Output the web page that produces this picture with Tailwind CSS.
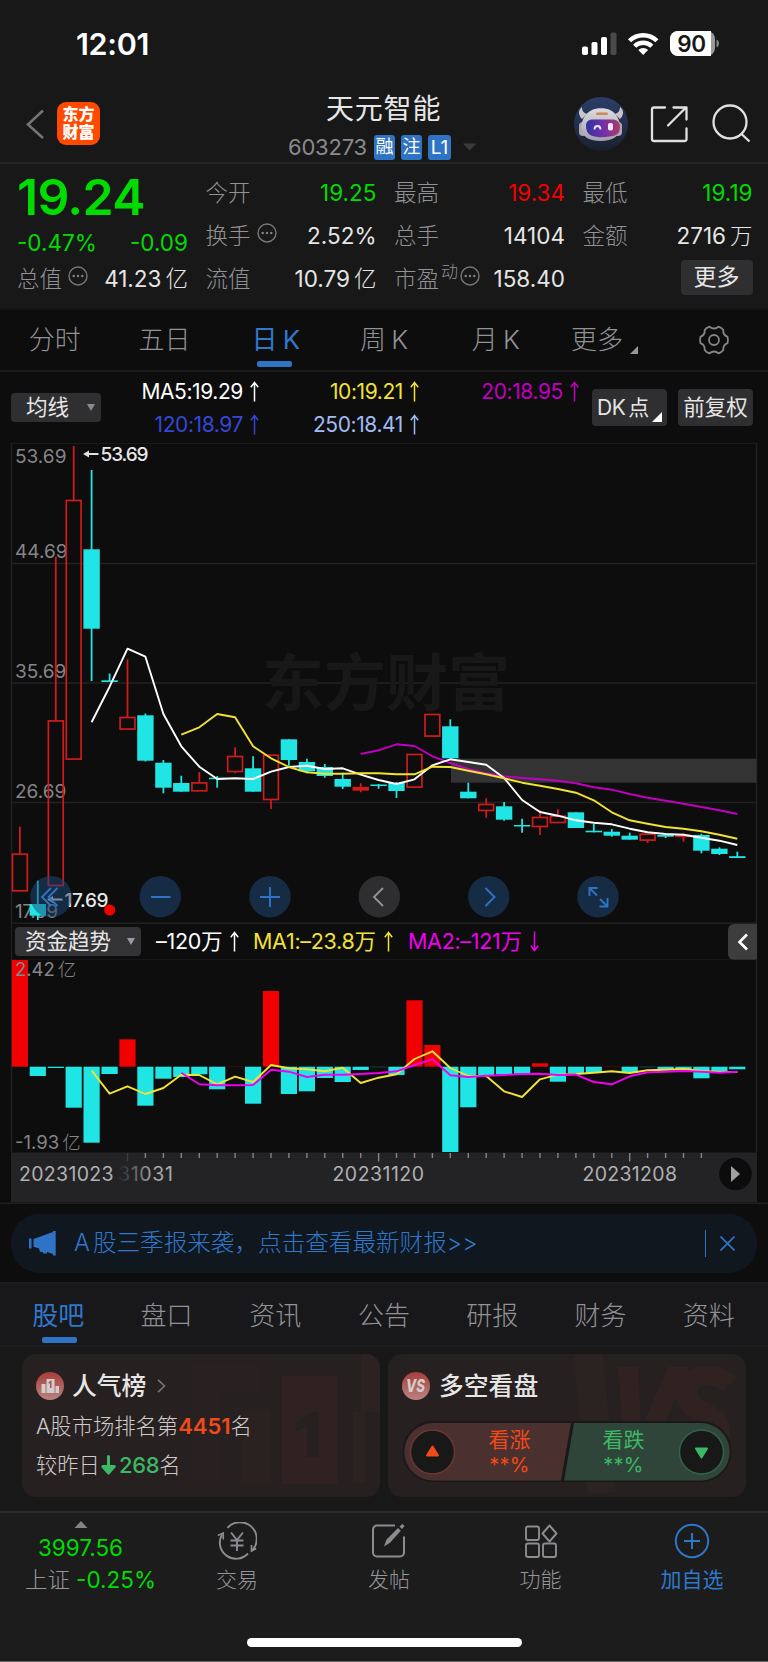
<!DOCTYPE html>
<html lang="zh-CN">
<head>
<meta charset="utf-8">
<title>天元智能 603273</title>
<script src="https://cdn.jsdelivr.net/npm/@tailwindcss/browser@4"></script>
</head>
<body class="bg-[#0d0d0d]">
<div class="w-[768px] h-[1662px] overflow-hidden flex flex-col bg-[#0d0d0d] text-[#e6e6e6] font-['Inter','Noto_Sans_CJK_SC',sans-serif] leading-none whitespace-nowrap">

  <!-- status bar -->
  <div class="h-[88px] shrink-0 bg-[#181818] flex justify-between items-center pl-[76px] pr-[49px]">
    <div class="text-[30.500px] font-semibold text-white tracking-[-0.300px]">12:01</div>
    <svg width="139" height="30" viewBox="580 29 139 30">
      <g fill="#fff"><rect x="582" y="46.500" width="6" height="8.500" rx="1.800"/><rect x="591.500" y="42" width="6" height="13" rx="1.800"/><rect x="601" y="37" width="6" height="18" rx="1.800"/></g>
      <rect x="610.500" y="32.500" width="6" height="22.500" rx="1.800" fill="#4a4a4a"/>
      <g fill="none" stroke="#fff" stroke-width="4.400"><path d="M629.500 40.800a19.500 19.500 0 0 1 27.400 0"/><path d="M634.600 46.300a12.200 12.200 0 0 1 17.200 0"/></g>
      <path d="M638.300 50a7 7 0 0 1 9.800 0l-4.900 5z" fill="#fff"/>
      <rect x="670" y="31" width="45" height="25" rx="8" fill="#9a9a9a"/>
      <path d="M678 31h33v25h-33a8 8 0 0 1-8-8v-9a8 8 0 0 1 8-8z" fill="#fff"/>
      <path d="M716.500 39.500q2.500 1 2.500 4t-2.500 4z" fill="#8a8a8a"/>
      <text x="691.500" y="51.500" text-anchor="middle" font-size="22.500" font-weight="600" fill="#181818" letter-spacing="-0.300">90</text>
    </svg>
  </div>

  <!-- title bar -->
  <div class="h-[76px] shrink-0 bg-[#181818] border-b-2 border-[#242424] flex items-start pl-[25px]">
    <svg class="mt-[21px]" width="22" height="30"><path d="M18 1.500L3 15.500l15 13.500" fill="none" stroke="#747474" stroke-width="2.600"/></svg>
    <div class="ml-[10px] mt-[14px] w-[43px] h-[43px] rounded-[9px] bg-[#ff4a00] text-white text-[16px] font-black leading-[18px] text-center pt-[3px]">东方<br>财富</div>
    <div class="ml-[188px] w-[190px] flex flex-col">
      <div class="mt-[6px] h-[30px] text-[28px] leading-[30px] pl-[38px] tracking-[0.800px]">天元智能</div>
      <div class="mt-[10px] h-[26px] flex items-center">
        <span class="text-[22px] w-[86px] text-[#8a8a8e] tracking-[-0.200px]">603273</span>
        <span class="w-[21px] h-[25px] rounded-[3px] bg-[#2f73c4] text-white text-[18px] leading-[24px] text-center">融</span>
        <span class="ml-[6px] w-[21px] h-[25px] rounded-[3px] bg-[#2f73c4] text-white text-[18px] leading-[24px] text-center">注</span>
        <span class="ml-[6px] w-[23px] h-[25px] rounded-[3px] bg-[#2f73c4] text-white text-[19px] leading-[25px] text-center">L1</span>
        <svg class="ml-[12px] shrink-0" width="14" height="8"><path d="M0 .5h13.500L6.700 7.500z" fill="#3b3b3b"/></svg>
      </div>
    </div>
    <svg class="ml-auto" width="196" height="70" viewBox="572 88 196 70">
      <defs>
        <linearGradient id="halo" x1="0" x2="0" y1="0" y2="1"><stop offset="0" stop-color="#2b3d68"/><stop offset=".6" stop-color="#222d4a"/><stop offset="1" stop-color="#1a1f2b"/></linearGradient>
        <linearGradient id="visor" x1="0" x2="1"><stop offset="0" stop-color="#3032a0"/><stop offset=".5" stop-color="#7030a8"/><stop offset="1" stop-color="#b03a68"/></linearGradient>
        <linearGradient id="shell" x1="0" x2="0" y1="0" y2="1"><stop offset="0" stop-color="#dddcdf"/><stop offset="1" stop-color="#a3a0ac"/></linearGradient>
      </defs>
      <circle cx="601" cy="124" r="27" fill="url(#halo)"/>
      <path d="M582 107c-4 3-4 8 0 12l5-5c-3-1-5-3-5-7zM620 107c4 3 4 8 0 12l-5-5c3-1 5-3 5-7z" fill="#c8c6cc"/>
      <rect x="579" y="122" width="8" height="14" rx="4" fill="#a9a8b5"/><rect x="614" y="122" width="8" height="14" rx="4" fill="#a9a8b5"/>
      <path d="M592 110c4-2.500 14-2.500 18 0 6 3 10 9 10 17 0 9-7 14-19.500 14S581.500 136 581.500 127c0-8 4.500-14 10.500-17z" fill="url(#shell)"/>
      <path d="M586 126c0-4 2-6.500 7-6.500h19c5 0 8 2.500 8 7.500 0 6-3 8.500-10 9.500-15 2-24 0-24-10.500z" fill="url(#visor)"/>
      <path d="M594.500 129.500q0-3.500 3-3.500t3 3.500" fill="none" stroke="#e4e6ff" stroke-width="1.800"/><rect x="608" y="123" width="5" height="7.500" rx="1.800" fill="#f0e4ff"/>
      <rect x="596" y="112.500" width="12" height="2.500" rx="1.200" fill="#c98a5c"/>
      <g fill="none" stroke="#e0e0e0" stroke-width="2.300" stroke-linecap="round" stroke-linejoin="round"><path d="M665 107.500h-11a2 2 0 0 0-2 2v29.500a2 2 0 0 0 2 2h30.500a2 2 0 0 0 2-2v-10.500M668 125.500L686 107.500M673.500 107.500h13v12"/></g>
      <g fill="none" stroke="#e0e0e0" stroke-width="2.300"><circle cx="730" cy="122" r="16.500"/><path d="M741 133.500L749.500 141.500"/></g>
    </svg>
  </div>

  <!-- quote summary -->
  <div class="h-[146px] shrink-0 bg-[#181818] border-b-2 border-[#141414] grid grid-cols-[171px_171px_171px_170px] grid-rows-[43px_43px_43px] gap-x-[17.500px] content-start pt-[8px] pl-[17px] text-[22.500px]">
    <div class="row-span-2 flex flex-col text-[#00dc00]">
      <div class="text-[50px] font-semibold tracking-[-0.700px] h-[50px] leading-[50px]">19.24</div>
      <div class="flex justify-between mt-[10px] text-[22.500px]"><span>-0.47%</span><span>-0.09</span></div>
    </div>
    <div class="flex justify-between items-center"><span class="text-[#929296] font-light">今开</span><span class="text-[#00dc00]">19.25</span></div>
    <div class="flex justify-between items-center"><span class="text-[#929296] font-light">最高</span><span class="text-[#f40000]">19.34</span></div>
    <div class="flex justify-between items-center"><span class="text-[#929296] font-light">最低</span><span class="text-[#00dc00]">19.19</span></div>
    <div class="flex justify-between items-center"><span class="flex items-center gap-[6px] text-[#929296] font-light">换手<svg class="mb-[8px]" width="20" height="20"><circle cx="10" cy="10" r="9" fill="none" stroke="#77777a" stroke-width="1.400"/><g fill="#858589"><circle cx="5.700" cy="10" r="1.200"/><circle cx="10" cy="10" r="1.200"/><circle cx="14.300" cy="10" r="1.200"/></g></svg></span><span>2.52%</span></div>
    <div class="flex justify-between items-center"><span class="text-[#929296] font-light">总手</span><span>14104</span></div>
    <div class="flex justify-between items-center"><span class="text-[#929296] font-light">金额</span><span class="flex items-center gap-[4px]">2716<span class="font-light">万</span></span></div>
    <div class="flex justify-between items-center"><span class="flex items-center gap-[6px] text-[#929296] font-light">总值<svg class="mb-[8px]" width="20" height="20"><circle cx="10" cy="10" r="9" fill="none" stroke="#77777a" stroke-width="1.400"/><g fill="#858589"><circle cx="5.700" cy="10" r="1.200"/><circle cx="10" cy="10" r="1.200"/><circle cx="14.300" cy="10" r="1.200"/></g></svg></span><span class="flex items-center gap-[4px]">41.23<span class="font-light">亿</span></span></div>
    <div class="flex justify-between items-center"><span class="text-[#929296] font-light">流值</span><span class="flex items-center gap-[4px]">10.79<span class="font-light">亿</span></span></div>
    <div class="flex justify-between items-center"><span class="flex items-center text-[#929296] font-light">市盈<span class="text-[17px] mb-[14px] ml-[2px]">动</span><svg class="mb-[8px] ml-[2px]" width="20" height="20"><circle cx="10" cy="10" r="9" fill="none" stroke="#77777a" stroke-width="1.400"/><g fill="#858589"><circle cx="5.700" cy="10" r="1.200"/><circle cx="10" cy="10" r="1.200"/><circle cx="14.300" cy="10" r="1.200"/></g></svg></span><span>158.40</span></div>
    <div class="flex justify-end items-center"><span class="w-[72px] h-[35px] mb-[4px] rounded-[4px] bg-[#2f2f31] text-center text-[23px] leading-[34px]">更多</span></div>
  </div>

  <!-- period tabs -->
  <div class="h-[62px] shrink-0 border-b-2 border-[#1b1b1b] grid grid-cols-7 text-[26px] font-light text-[#929296] text-center [word-spacing:-2px]">
    <div class="pt-[17px]">分时</div>
    <div class="pt-[17px]">五日</div>
    <div class="pt-[17px] flex flex-col items-center text-[#2f78cc]"><span class="font-normal pl-[3px]">日 K</span><span class="mt-[8px] w-[35px] h-[6px] rounded-[2px] bg-[#2f73c4]"></span></div>
    <div class="pt-[17px]">周 K</div>
    <div class="pt-[17px] pl-[4px]">月 K</div>
    <div class="pt-[17px] pl-[2px] flex justify-center gap-[7px]"><span>更多</span><svg class="mt-[19px]" width="8" height="8"><path d="M8 0v8H0z" fill="#98989b"/></svg></div>
    <div class="pt-[14px] pl-[1px] flex justify-center"><svg width="32" height="32" viewBox="-16 -16 32 32"><g fill="none" stroke="#858589" stroke-width="1.800" stroke-linejoin="round"><path d="M-4.500-13.300Q0-9.800 4.500-13.300Q7.700-12.300 9.300-10Q8.800-5.200 13.500-3.200Q14.400 0 13.500 3.200Q8.800 5.200 9.300 10Q7.700 12.300 4.500 13.300Q0 9.800-4.500 13.300Q-7.700 12.300-9.300 10Q-8.800 5.200-13.500 3.200Q-14.400 0-13.500-3.200Q-8.800-5.200-9.300-10Q-7.700-12.300-4.500-13.300z"/><circle r="5"/></g></svg></div>
  </div>

  <!-- moving averages -->
  <div class="h-[71px] shrink-0 flex items-center pl-[11px] text-[21px]">
    <div class="w-[90px] h-[29px] rounded-[4px] bg-[#2f2f31] flex items-center justify-between pl-[15px] pr-[6px] text-[21.500px]">均线<svg width="8" height="7"><path d="M0 0h8L4 7z" fill="#8a8a8e"/></svg></div>
    <div class="w-[479px] grid grid-cols-[158px_160px_160px] grid-rows-[33px_33px] tracking-[-0.400px]">
      <div class="flex items-center justify-end gap-[7px] text-white">MA5:19.29<svg width="9" height="21"><path d="M4.500 20.500V2M.8 6.200L4.500 1.500l3.700 4.700" fill="none" stroke="currentColor" stroke-width="1.500"/></svg></div>
      <div class="flex items-center justify-end gap-[7px] text-[#f2e233]">10:19.21<svg width="9" height="21"><path d="M4.500 20.500V2M.8 6.200L4.500 1.500l3.700 4.700" fill="none" stroke="currentColor" stroke-width="1.500"/></svg></div>
      <div class="flex items-center justify-end gap-[7px] text-[#c000c0]">20:18.95<svg width="9" height="21"><path d="M4.500 20.500V2M.8 6.200L4.500 1.500l3.700 4.700" fill="none" stroke="currentColor" stroke-width="1.500"/></svg></div>
      <div class="flex items-center justify-end gap-[7px] text-[#3546d6]">120:18.97<svg width="9" height="21"><path d="M4.500 20.500V2M.8 6.200L4.500 1.500l3.700 4.700" fill="none" stroke="currentColor" stroke-width="1.500"/></svg></div>
      <div class="flex items-center justify-end gap-[7px] text-[#a0bbf4]">250:18.41<svg width="9" height="21"><path d="M4.500 20.500V2M.8 6.200L4.500 1.500l3.700 4.700" fill="none" stroke="currentColor" stroke-width="1.500"/></svg></div>
    </div>
    <div class="ml-[12px] w-[75px] h-[37px] rounded-[4px] bg-[#2f2f31] flex items-center relative pl-[5px] gap-[3px] text-[21px]"><span class="tracking-[-0.500px]">DK</span><span>点</span><svg class="absolute right-[5px] bottom-[4px]" width="10" height="10"><path d="M10 0v10H0z" fill="#fff"/></svg></div>
    <div class="ml-[11px] w-[75px] h-[37px] rounded-[4px] bg-[#2f2f31] flex items-center justify-center text-[21.500px]">前复权</div>
  </div>

  <!-- candlestick chart -->
  <svg class="shrink-0" id="candles" width="768" height="481" viewBox="0 443 768 481"></svg>

  <!-- capital flow indicator header -->
  <div class="h-[35px] shrink-0 mx-[11px] border-x border-[#222] flex items-center pl-[3px] text-[21.500px]">
    <div class="w-[126px] h-[29px] rounded-[4px] bg-[#333335] flex items-center justify-between pl-[10px] pr-[6px] text-[21.500px]">资金趋势<svg width="8" height="7"><path d="M0 0h8L4 7z" fill="#9a9aa0"/></svg></div>
    <div class="ml-[15px] w-[97px] flex items-center gap-[8px] text-white tracking-[-0.300px]">–120万<svg width="9" height="21"><path d="M4.500 20.500V2M.8 6.200L4.500 1.500l3.700 4.700" fill="none" stroke="currentColor" stroke-width="1.500"/></svg></div>
    <div class="w-[155px] flex items-center gap-[8px] text-[#f2e233] tracking-[-0.300px]">MA1:–23.8万<svg width="9" height="21"><path d="M4.500 20.500V2M.8 6.200L4.500 1.500l3.700 4.700" fill="none" stroke="currentColor" stroke-width="1.500"/></svg></div>
    <div class="flex items-center gap-[8px] text-[#f000f0] tracking-[-0.300px]">MA2:–121万<svg width="9" height="21"><path d="M4.500 .5V19M.8 14.800l3.700 4.700 3.700-4.700" fill="none" stroke="currentColor" stroke-width="1.500"/></svg></div>
    <div class="ml-auto -mr-px w-[29px] h-[36px] rounded-l-[6px] bg-[#3d3d3e] flex items-center justify-center"><svg width="12" height="18"><path d="M10 1.500L2.500 9l7.500 7.500" fill="none" stroke="#fff" stroke-width="2.600"/></svg></div>
  </div>

  <!-- capital flow chart -->
  <svg class="shrink-0" id="flow" width="768" height="245" viewBox="0 959 768 245"></svg>

  <!-- notice -->
  <div class="h-[80px] shrink-0 pt-[9.500px] px-[11px] border-b-2 border-[#1d1d1f]">
    <div class="h-[59px] rounded-[28px] bg-[#10171f] flex items-center pl-[18px] pr-[22px] text-[#2f78cc]">
      <svg width="27" height="25"><path d="M0 7.500h2.500v10H0zM4.500 8L24 1V0h2.700v24.500H24V23l-6-2v1.500h-4V21h-3l-1-3.500-5.500-1.800z" fill="#2f73c4"/></svg>
      <span class="ml-[18px] text-[23.600px] font-light">A<span class="ml-[3px]">股三季报来袭，点击查看最新财报&gt;&gt;</span></span>
      <span class="ml-auto w-[1.500px] h-[27px] bg-[#2f73c4]"></span>
      <svg class="ml-[14px]" width="15" height="15"><path d="M.5 .5l14 14M14.500 .5l-14 14" stroke="#2f73c4" stroke-width="1.700"/></svg>
    </div>
  </div>

  <!-- content tabs -->
  <div class="h-[63px] shrink-0 bg-[#18181a] border-b-2 border-[#1d1d1d] px-[5px] grid grid-cols-7 text-[26px] font-light text-[#929296] text-center">
    <div class="pt-[17px] flex flex-col items-center text-[#2f78cc]"><span class="font-normal leading-[30px] -ml-[2px]">股吧</span><span class="mt-[6px] w-[35px] h-[6px] rounded-[2px] bg-[#2f73c4]"></span></div>
    <div class="pt-[17px] leading-[30px] -ml-[2px]">盘口</div><div class="pt-[17px] leading-[30px] -ml-[1px]">资讯</div><div class="pt-[17px] leading-[30px]">公告</div><div class="pt-[17px] leading-[30px]">研报</div><div class="pt-[17px] leading-[30px]">财务</div><div class="pt-[17px] leading-[30px]">资料</div>
  </div>

  <!-- cards -->
  <div class="h-[166px] shrink-0 bg-[#181818] border-b-2 border-[#2b2b2b] pt-[7px] pl-[22px] flex gap-[8px]">
    <div class="w-[358px] h-[143px] rounded-[14px] bg-[#272020] relative overflow-hidden">
      <svg class="absolute inset-0" width="358" height="143"><path d="M171 10h67v27h-40v89h-27z" fill="#292121"/><path d="M220 57h28v72h-28z" fill="#2c2121"/><path d="M260 22h55v108h-55z" fill="#302222"/><path d="M339 0h19v58h-15v70h-12V58h8z" fill="#2c2222"/><path d="M274 68l17-10h6v45h-12V72l-11 5z" fill="#272020"/></svg>
      <div class="relative pl-[14px] pt-[18px] flex items-center">
        <svg width="28" height="28"><defs><linearGradient id="rose" x1="0" x2="0" y1="0" y2="1"><stop offset="0" stop-color="#a83e3a"/><stop offset="1" stop-color="#b98380"/></linearGradient></defs><circle cx="14" cy="14" r="14" fill="url(#rose)"/><path d="M5.500 12h4v9h-4zM10.500 7h8v14h-8zM19.500 14h3.500v7h-3.500z" fill="#d2cccc"/><path d="M12.800 11l2-1.300v6.300" stroke="#a65652" stroke-width="1.500" fill="none"/></svg>
        <span class="ml-[8px] text-[24.800px] font-medium">人气榜</span>
        <svg class="ml-[11px]" width="9" height="14"><path d="M1 .8l6.500 6.200L1 13.200" fill="none" stroke="#77777a" stroke-width="1.600"/></svg>
      </div>
      <div class="relative pl-[14px] mt-[15px] h-[22px] leading-[22px] text-[21.300px] text-[#cfcbcb] font-light">A股市场排名第<span class="text-[#f04a18] font-semibold text-[22px]">4451</span>名</div>
      <div class="relative pl-[14px] mt-[17px] h-[22px] leading-[22px] text-[21.300px] text-[#cfcbcb] font-light flex items-center">较昨日<svg class="mx-px" width="15" height="20"><path d="M7.500 1.500v15M1.800 11.500l5.700 6.500 5.700-6.500z" stroke="#3cb866" stroke-width="3" stroke-linecap="round" stroke-linejoin="round" fill="#3cb866"/></svg><span class="text-[#3cb866] font-medium text-[22px] tracking-[-0.300px] ml-[2px]">268</span>名</div>
    </div>
    <div class="w-[358px] h-[143px] rounded-[14px] bg-[#272020] relative overflow-hidden">
      <svg class="absolute inset-0" width="358" height="143"><path d="M185 0h30l13 138-28 3z" fill="#2b2222"/><path d="M230 13h20l3 62 27-62h21l-42 98h-22zM349 24l-14 13c-10-8-26-7-26 2 0 10 33 12 33 37 0 22-24 34-60 25l4-16c20 5 34 3 34-7 0-11-32-12-32-37 0-30 38-38 61-17z" fill="#312222"/></svg>
      <div class="relative pl-[14px] pt-[18px] flex items-center">
        <svg width="28" height="28"><circle cx="14" cy="14" r="14" fill="url(#rose)"/><text x="13.500" y="20" text-anchor="middle" font-size="17" font-weight="800" font-style="italic" fill="#d4cccc" textLength="19" lengthAdjust="spacingAndGlyphs">VS</text></svg>
        <span class="ml-[9px] text-[24.800px] font-medium">多空看盘</span>
      </div>
      <div class="absolute left-[14px] top-[66px] w-[332px] h-[64px]">
        <svg class="absolute inset-0" width="332" height="64" viewBox="402 1420 332 64">
          <rect x="402.500" y="1421" width="329" height="61" rx="30.500" fill="#1a1818"/>
          <path d="M433 1423h138l-10 57.500H433a28.700 28.700 0 0 1 0-57.500z" fill="#4a302e"/>
          <path d="M574 1423H701a28.700 28.700 0 0 1 0 57.500H564z" fill="#2f4539"/>
          <circle cx="432.500" cy="1452" r="22" fill="#181818" stroke="#6b3733" stroke-width="1.500"/>
          <circle cx="701.500" cy="1452" r="22" fill="#181818" stroke="#30644a" stroke-width="1.500"/>
          <path d="M432.500 1446.500l5.500 9h-11z" fill="#f04a18" stroke="#f04a18" stroke-width="2" stroke-linejoin="round"/>
          <path d="M701.500 1457.500l5.500-9h-11z" fill="#3cb866" stroke="#3cb866" stroke-width="2" stroke-linejoin="round"/>
        </svg>
        <div class="relative flex justify-between pl-[64px] pr-[67px] pt-[9px] text-center">
          <div class="w-[87px] flex flex-col text-[#f04a18]"><span class="h-[24px] leading-[22px] text-[21px]">看涨</span><span class="h-[24px] leading-[24px] text-[20px] tracking-[0.300px]">**%</span></div>
          <div class="w-[87px] flex flex-col text-[#3cb866]"><span class="h-[24px] leading-[22px] text-[21px]">看跌</span><span class="h-[24px] leading-[24px] text-[20px] tracking-[0.300px]">**%</span></div>
        </div>
      </div>
    </div>
  </div>

  <!-- bottom navigation -->
  <div class="h-[149px] shrink-0 bg-[#1c1c1c] border-b border-[#666] flex flex-col">
    <div class="h-[125px] flex text-[21px] text-[#96969a] font-light">
      <div class="w-[161px] flex flex-col items-center pt-[8px]">
        <svg width="14" height="7"><path d="M7 0l6.500 7H.5z" fill="#858589"/></svg>
        <span class="mt-[9px] text-[22.500px] font-normal text-[#00dc00]">3997.56</span>
        <span class="mt-[9px] ml-[20px] flex items-center gap-[6px] text-[22.500px]">上证<span class="font-normal text-[#00dc00]">-0.25%</span></span>
      </div>
      <div class="w-[152px] flex flex-col items-center pt-[9px]">
        <svg width="40" height="38" viewBox="0 0 40 38"><g fill="none" stroke="#8c8c90" stroke-width="1.900"><path d="M10.500 5.800A16.200 16.200 0 0 1 35.500 28M31 31.500A16.200 16.200 0 0 1 5 12.500"/><path d="M.8 13.500l5.400-2.500v6.500M39.200 26.500l-4.700 2.500v-6" stroke-width="1.700"/><path d="M14 10.500l6 7.500 6-7.500M20 18v11M13.500 18.500h13M13.500 23.500h13"/></g></svg>
        <span class="mt-[9px]">交易</span>
      </div>
      <div class="w-[152px] flex flex-col items-center pt-[9px]">
        <svg width="38" height="38" viewBox="0 0 38 38"><path d="M25 3.500H7a4 4 0 0 0-4 4v23a4 4 0 0 0 4 4h23a4 4 0 0 0 4-4v-16" fill="none" stroke="#8c8c90" stroke-width="2"/><path d="M14 24.500l2.500-7L28 6l2.800 2.800-10.800 12zM29.500 4.500l3-2.500 2 2-2.500 3z" fill="#8c8c90"/></svg>
        <span class="mt-[9px]">发帖</span>
      </div>
      <div class="w-[151px] flex flex-col items-center pt-[9px]">
        <svg width="34" height="38" viewBox="0 0 34 38"><g fill="none" stroke="#8c8c90" stroke-width="1.900" stroke-linejoin="round"><rect x="2" y="4.500" width="13" height="13.500" rx="2"/><rect x="2" y="21.500" width="13" height="13.500" rx="2"/><rect x="19" y="21.500" width="13" height="13.500" rx="2"/><path d="M25.500 3.500l7 8-7 8-7-8z"/></g></svg>
        <span class="mt-[9px]">功能</span>
      </div>
      <div class="w-[152px] flex flex-col items-center pt-[9px] text-[#2f78cc]">
        <svg width="38" height="38"><g fill="none" stroke="#2f78cc" stroke-width="1.900"><circle cx="19" cy="19" r="16.200"/><path d="M11 19h16M19 11v16"/></g></svg>
        <span class="mt-[9px] font-normal">加自选</span>
      </div>
    </div>
    <div class="mx-auto w-[275px] h-[9px] rounded-full bg-white"></div>
  </div>
</div>

<script>
const C = '#20e5e5', R = '#cf1b1b', X = i => +(19.9 + 17.935 * i).toFixed(1);
const line = (pts, start, color, w = 1.9) =>
  `<polyline fill="none" stroke="${color}" stroke-width="${w}" stroke-linejoin="round" points="${pts.map((y, k) => X(start + k) + ',' + y).join(' ')}"/>`;

// [direction, body top, body bottom, wick top, wick bottom]
const candles = [
  [1,854,891,826.7,891],[0,904,915.7,880.7,920],[1,720.7,885.7,556.7,885.7],[1,500.3,759.3,446,759.3],[0,549.3,628.7,470,681],
  [0,680.3,682,673.5,682],[1,717.3,729.3,659.3,729.3],[0,715.3,760.7,713.5,761.5],[0,762.7,787.7,760,793.3],[0,783,791.7,775.7,791.7],
  [1,782.7,791,772,791],[0,777.7,779.2,776,787.7],[1,756.3,771.7,747.3,773.3],[0,768.3,791.7,756.3,791.7],[1,755,799.7,755,809],
  [0,739.3,760,739.3,765.7],[0,762,771.3,758.7,773.3],[0,767,776,764,777.7],[0,779,786.7,772.7,789],[1,787.5,790,783.3,792.3],
  [0,784.5,786,784,788.7],[0,783,791,782,798],[1,754.3,787.3,754.3,787.3],[1,714.3,736.3,714.3,736.3],[0,726.3,758.3,719.3,758.3],
  [0,791.7,798.3,782.7,798.3],[1,804.3,810.7,798.3,817.7],[0,806.3,819.7,802,820.7],[0,825,826.5,818.7,832.7],[1,817.3,826.7,810.3,835],
  [1,816,822.7,809.3,822.7],[0,812.3,828,812.3,828],[0,830.7,832.3,824,832.3],[0,831.7,835.7,829,836.7],[0,835.7,839.7,832.7,839.7],
  [1,834,840.3,834,843],[0,835,836.7,833.3,838],[1,835.3,836.5,833,841.7],[0,835,850.7,833.7,853.3],[0,848.7,854,847.3,855],[0,856.2,858,851.7,858]];
let s = `<g stroke="#222224" stroke-width="1.500" fill="none"><rect x="11.500" y="442.900" width="745" height="480.300"/><path d="M11 563.500H757M11 683H757M11 802.500H757"/></g>
<text x="262" y="706" font-size="62" font-weight="700" fill="#181818">东方财富</text>
<rect x="451" y="758.700" width="305.500" height="24" fill="#333"/>
<g font-size="19" fill="#858589"><text x="15" y="462.500">53.69</text><text x="15" y="557.500">44.69</text><text x="15" y="677.500">35.69</text><text x="15" y="797.500">26.69</text><text x="15" y="917.500" textLength="43">17.69</text></g>`;
candles.forEach(([up, t, b, h, l], i) => {
  const x = X(i);
  if (up) s += `<path d="M${x} ${h}V${t}M${x} ${b}V${l}" stroke="${R}" stroke-width="1.800"/><rect x="${x - 7.4}" y="${t + .2}" width="14.800" height="${b - t - .4}" fill="${b - t < 4 ? R : 'none'}" stroke="${R}" stroke-width="1.700"/>`;
  else s += `<path d="M${x} ${h}V${l}" stroke="${C}" stroke-width="1.800"/><rect x="${x - 8.2}" y="${t}" width="16.400" height="${b - t}" fill="${C}"/>`;
});
s += line([754,750.3,744.3,746,756.3,763,769,773.3,776.3,778,779.3,780.7,783.3,787.3,789.7,794,797.7,800.7,803.7,807,810.3,814], 19, '#c000c0');
s += line([722.3,686.7,648.7,656.7,714,746.3,766.7,779,778.3,779,771.7,767,765.7,769,768.3,774.7,780,784,779.3,765.3,759.3,762,764.7,778,800,812,815.7,820.3,822.7,824.3,828.7,832.3,834,834.7,837.7,840.7,845], 4, '#fff');
s += line([734.7,727.3,714,717.3,746.3,758.3,767,772.3,773.7,773.7,773.3,773.3,774.3,774.3,766.7,767,770.7,774.3,778.3,782.7,785.7,789,792.7,800.3,812.3,820.3,823.7,827,828.7,831.3,834.7,838.7], 9, '#f2e233');
s += `<g fill="#e8e8e8" font-size="19" font-weight="500"><text x="100.500" y="461" textLength="48">53.69</text><text x="64.500" y="906.500" textLength="44">17.69</text></g>
<g stroke="#e0e0e0" stroke-width="1.800" fill="#e0e0e0"><path d="M86 454h12.500M50 899.500h12.500"/><path stroke="none" d="M83 454l6-3.500v7zM47 899.500l6-3.500v7z"/></g>
<circle cx="109.700" cy="910" r="5.600" fill="#f00000"/>`;
[51, 160.3, 270, 379.3, 488.7, 598].forEach((x, i) => s += `<circle cx="${x}" cy="896.700" r="20.700" fill="${i === 3 ? '#2e2e30' : '#1f4876'}" opacity="${i === 3 ? 1 : .52}"/>`);
s += `<g fill="none" stroke="#2f73c4" stroke-width="1.900">
<path d="M51 888l-9 9 9 9M57.500 888l-9 9 9 9M151 897h19.500M260 897h20M270 887v20M485.500 888l9 9-9 9"/>
<path d="M589.500 896v-8h8M590 888.500l7 7M607.500 898v8.500h-8M607 906l-7-7"/></g>
<path d="M383 888l-9 9 9 9" fill="none" stroke="#929292" stroke-width="1.900"/>`;
document.getElementById('candles').innerHTML = s;

// bar ends relative to the zero line at 1066.7
const Z = 1066.7;
const flow = [960,1076,1068,1107.7,1142.7,1074,1039.3,1105.7,1078.7,1077,1074.3,1089.3,1066.2,1103.7,991,1094,1091.3,1078,1082,1070,1067.3,1075,1000.3,1045,1152,1107.3,1075.7,1074.3,1073.7,1063.3,1081.7,1073,1073,1066.2,1072.7,1067.3,1070,1069,1078.3,1072.7,1069.3];
let v = `<g fill="none" stroke="#222224" stroke-width="1.500"><path d="M11 958.800H757M11.500 959V1152M756.500 959V1152"/></g><rect x="11" y="1152.500" width="746" height="50" fill="#232325"/><path d="M0 1203.200H768" stroke="#1f1f1f" stroke-width="1.500"/>`;
flow.forEach((y, i) => v += `<rect x="${X(i) - 8.1}" y="${Math.min(y, Z)}" width="16.200" height="${Math.abs(y - Z)}" fill="${y < Z ? '#f00000' : C}" opacity="${Math.abs(y - Z) < 1 ? .4 : 1}"/>`);
v += line([1070.7,1093.7,1086.3,1094,1088,1074.7,1075,1084.3,1076.7,1082,1065,1068.3,1069.3,1071.3,1067.7,1083,1077.7,1074.3,1059,1051.3,1068,1076,1076,1091.3,1097,1079.3,1074.7,1074,1072.7,1071.3,1073,1070.3,1069.7,1069,1071,1072,1072], 4, '#f2e233');
v += line([1072.7,1084.3,1085.3,1085.3,1085,1069.7,1071.7,1077,1074.7,1074.7,1074,1073,1071.3,1065,1059.3,1075.3,1077,1075.7,1075,1074,1073.7,1075,1074.7,1082,1084.3,1076.3,1072.3,1071.7,1071,1071.7,1072.7,1071.7], 9, '#f000f0');
for (let i = 6; i <= 38; i++) {
  const major = i === 6 || i === 20 || i === 34;
  v += `<path d="M${X(i)} 1153V${major ? 1161.5 : 1158}" stroke="${i === 6 ? '#3c3c3e' : '#858589'}" stroke-width="1.400"/>`;
}
// the second date label fades out behind the first one
v += `<defs><linearGradient id="fade" gradientUnits="userSpaceOnUse" x1="122" x2="152" y1="0" y2="0"><stop offset="0" stop-color="#a8a8aa" stop-opacity=".1"/><stop offset="1" stop-color="#a8a8aa"/></linearGradient></defs>
<g font-size="18.500" fill="#858589"><text x="15" y="976">2.42<tspan dx="3" font-weight="300">亿</tspan></text><text x="15" y="1148.500">-1.93<tspan dx="3" font-weight="300">亿</tspan></text></g>
<g font-size="19.500" fill="#b0b0b2"><text x="19" y="1181" textLength="94.500">20231023</text><text x="118" y="1181" textLength="55" fill="url(#fade)">31031</text><text x="332.500" y="1181" textLength="91.500">20231120</text><text x="582.500" y="1181" textLength="94.500">20231208</text></g>
<circle cx="735.500" cy="1174" r="16.300" fill="#0c0c0c"/><path d="M731 1166l9 8-9 8z" fill="#a0a0a0"/>`;
document.getElementById('flow').innerHTML = v;
</script>
</body>
</html>
